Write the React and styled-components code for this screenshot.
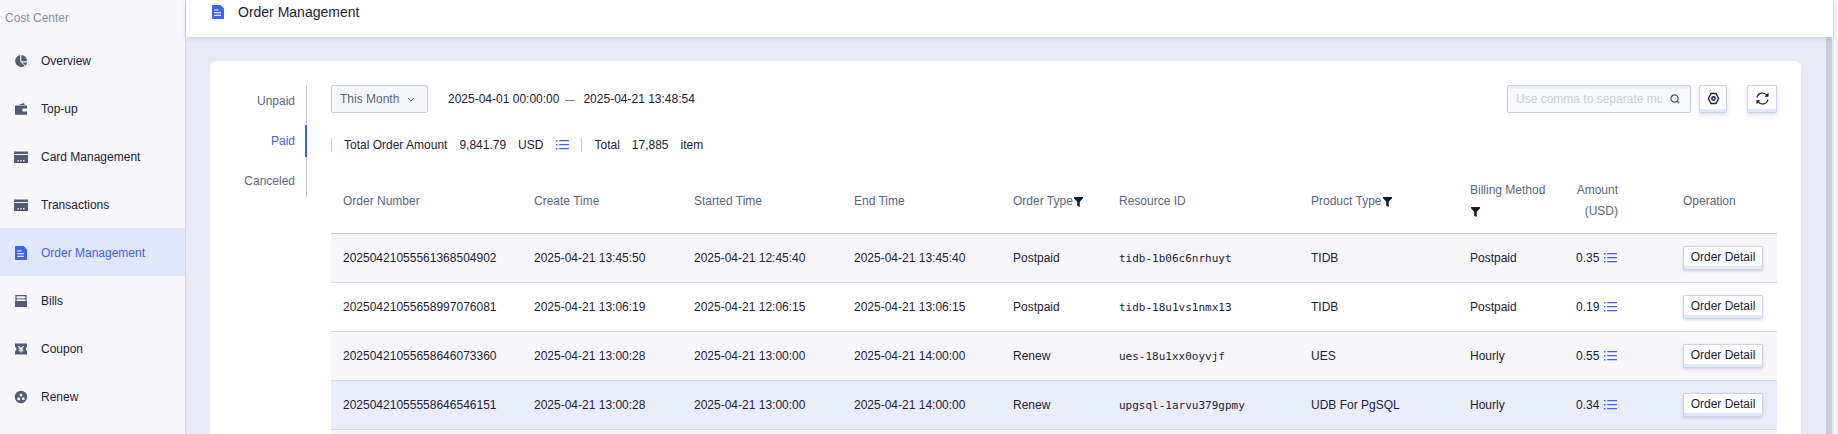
import React from "react";
import styled, { createGlobalStyle } from "styled-components";

const GlobalStyle = createGlobalStyle`
  html, body {
    margin: 0;
    padding: 0;
    height: 100%;
    overflow: hidden;
  }
  body {
    font-family: "Liberation Sans", Arial, sans-serif;
    font-size: 12px;
    color: #1d2235;
  }
  * { box-sizing: border-box; }
`;

const Page = styled.div`
  display: flex;
  width: 1838px;
  height: 434px;
  overflow: hidden;
  background: #e8ebf5;
`;

const Sidebar = styled.aside`
  flex: 0 0 186px;
  background: #f6f6fb;
  border-right: 1px solid #d5d9e6;
`;

const SidebarTitle = styled.div`
  height: 36px;
  line-height: 37px;
  padding-left: 5px;
  color: #8790a6;
`;

const MenuItem = styled.div`
  display: flex;
  align-items: center;
  gap: 13px;
  height: 48px;
  padding: 2px 0 0 14px;
  color: ${(p) => (p.$active ? "#3f62f6" : "#1d2235")};
  background: ${(p) => (p.$active ? "#e2e8fc" : "transparent")};
`;

const MenuIcon = styled.svg`
  flex: none;
  width: 14px;
  height: 14px;
`;

const Main = styled.main`
  flex: 1;
  display: flex;
  flex-direction: column;
  min-width: 0;
`;

const Header = styled.header`
  flex: 0 0 37px;
  display: flex;
  align-items: flex-start;
  gap: 13px;
  padding: 5px 0 0 25px;
  background: #fff;
  font-size: 14px;
  line-height: 14px;
  box-shadow: 0 2px 5px rgba(120, 130, 170, 0.22);
  position: relative;
`;

const Body = styled.div`
  flex: 1;
  display: flex;
  min-height: 0;
`;

const Scroller = styled.div`
  flex: 1;
  padding: 24px 25px 0 24px;
  min-width: 0;
`;

const ScrollTrack = styled.div`
  flex: 0 0 6px;
  margin-right: 1px;
  background: #c9ccd5;
  border-radius: 2px 2px 0 0;
`;

const RightEdge = styled.div`
  flex: 0 0 5px;
  background: #f4f4f8;
  border-left: 1px solid #e2e3ea;
`;

const Card = styled.section`
  display: flex;
  height: 100%;
  padding: 24px 24px 0 0;
  background: #fff;
  border-radius: 6px 6px 0 0;
`;

const Tabs = styled.nav`
  flex: 0 0 97px;
  align-self: flex-start;
  display: flex;
  flex-direction: column;
  gap: 8px;
  margin-right: 24px;
  border-right: 1px solid #c6cce0;
`;

const Tab = styled.div`
  height: 32px;
  display: flex;
  align-items: center;
  justify-content: flex-end;
  padding-right: 10px;
  color: ${(p) => (p.$active ? "#3f62f6" : "#5c6780")};
  border-right: 2px solid ${(p) => (p.$active ? "#3f62f6" : "transparent")};
  margin-right: -1px;
`;

const Content = styled.div`
  flex: 1;
  min-width: 0;
`;

const Toolbar = styled.div`
  display: flex;
  align-items: center;
  height: 28px;
`;

const Select = styled.div`
  display: flex;
  align-items: center;
  justify-content: space-between;
  width: 97px;
  height: 28px;
  padding: 0 12px 0 8px;
  color: #5c6780;
  background: #f6f7fb;
  border: 1px solid #c6cce0;
  border-radius: 2px;
  margin-right: 20px;
`;

const DateText = styled.span`
  white-space: nowrap;
`;

const DateDash = styled.span`
  width: 10px;
  height: 1px;
  margin: 2px 8px 0 6px;
  background: #7b849b;
`;

const Spacer = styled.div`
  flex: 1;
`;

const SearchBox = styled.div`
  display: flex;
  align-items: center;
  width: 184px;
  height: 28px;
  padding: 0 10px 0 8px;
  background: #f8f9fc;
  border: 1px solid #c6cce0;
  border-radius: 2px;
  box-shadow: inset 0 3px 0 #f1f2f7;
`;

const SearchInput = styled.input`
  flex: 1;
  min-width: 0;
  margin-right: 8px;
  padding: 0;
  border: 0;
  outline: 0;
  background: transparent;
  font: inherit;
  &::placeholder {
    color: #c9cdd9;
    opacity: 1;
  }
`;

const IconButton = styled.button`
  display: flex;
  align-items: center;
  justify-content: center;
  height: 28px;
  width: ${(p) => p.$w}px;
  margin-left: ${(p) => p.$ml}px;
  padding: 0 0 2px;
  background: #fff;
  border: 1px solid #cdd3e5;
  border-radius: 2px;
  box-shadow: inset 0 -3px 0 #e4e9fa, 0 2px 4px rgba(110, 120, 160, 0.25);
`;

const Summary = styled.div`
  display: flex;
  align-items: center;
  height: 14px;
  margin: 25px 0 15px;
  border-left: 1px solid #c6cce0;
  padding-left: 12px;
  white-space: nowrap;
`;

const SummaryText = styled.span`
  margin-right: 12px;
`;

const SummaryList = styled.span`
  display: flex;
  margin-left: 1px;
`;

const SummaryDivider = styled.span`
  width: 1px;
  height: 14px;
  margin: 0 12px;
  background: #c6cce0;
`;

const Table = styled.table`
  width: 1446px;
  table-layout: fixed;
  border-collapse: collapse;
`;

const Th = styled.th`
  height: 66px;
  padding: 3px 12px 0;
  font-weight: 400;
  line-height: 21px;
  text-align: left;
  color: #5c6780;
  border-bottom: 1px solid #c6cce0;
`;

const AmountHead = styled.span`
  display: inline-block;
  width: 42px;
  text-align: right;
`;

const Funnel = styled.svg`
  display: inline-block;
  width: 9px;
  height: 10px;
  margin-left: 1px;
  vertical-align: -2px;
`;

const Row = styled.tr`
  background: ${(p) => p.$bg};
`;

const Td = styled.td`
  height: 49px;
  padding: 0 12px;
  white-space: nowrap;
  border-bottom: 1px solid #d4d9ea;
`;

const Mono = styled.span`
  font-family: "DejaVu Sans Mono", "Liberation Mono", monospace;
  font-size: 11px;
`;

const AmountCell = styled.span`
  display: inline-flex;
  align-items: center;
  gap: 5px;
`;

const DetailButton = styled.button`
  width: 80px;
  height: 24px;
  padding: 0 0 2px;
  font: inherit;
  color: #1d2235;
  background: #fff;
  border: 1px solid #cdd3e5;
  border-radius: 2px;
  box-shadow: inset 0 -3px 0 #e4e9fa, 0 1px 3px rgba(110, 120, 160, 0.3);
`;

const GRAY = "#515d78";

const PieIcon = () => (
  <MenuIcon viewBox="0 0 14 14">
    <path fill={GRAY} d="M6.200 1v6.500l4.600 4.500A6.100 6.100 0 1 1 6.200 1z" />
    <path fill={GRAY} d="M7.400 1a6.100 6.100 0 0 1 5.700 6.200H7.400z" />
    <path fill={GRAY} d="M8.200 8.400h4.900a6 6 0 0 1-1.500 3z" />
  </MenuIcon>
);

const WalletIcon = () => (
  <MenuIcon viewBox="0 0 14 14">
    <path fill={GRAY} d="M4.500 2.900 10 .9l.8 2z" />
    <path fill={GRAY} d="M1 3.500h12v3H9.500a1.500 1.500 0 0 0 0 3H13v3.300H1z" />
  </MenuIcon>
);

const CardIcon = () => (
  <MenuIcon viewBox="0 0 14 14">
    <path fill={GRAY} d="M0 1.500h14v2.400H0zM0 5h14v8H0z" />
    <path fill="#f0f1f7" d="M3.500 10h1.500v1.200H3.500zM6.200 10h1.500v1.200H6.200zM9 10h1.500v1.200H9z" />
  </MenuIcon>
);

const BillIcon = () => (
  <MenuIcon viewBox="0 0 14 14">
    <path fill={GRAY} d="M1 7h12v6H1z" />
    <path fill="none" stroke={GRAY} strokeWidth="1.200" d="M2 7V1.600h10V7" />
    <path fill={GRAY} d="M2 4.300h10v1H2z" />
  </MenuIcon>
);

const CouponIcon = () => (
  <MenuIcon viewBox="0 0 14 14">
    <path fill={GRAY} d="M1 1.500h12v3.600a2 2 0 0 0 0 3.800v3.600H1V8.900a2 2 0 0 0 0-3.800z" />
    <path fill="#f0f1f7" d="m4.600 3.800 2.400 2 2.400-2 .6.800-1.800 1.900h1.100v1H7.600v.8h1.700v1H7.600v1.200H6.400v-1.200H4.700v-1h1.700v-.8H4.700v-1h1.100L4 4.600z" />
  </MenuIcon>
);

const RenewIcon = () => (
  <MenuIcon viewBox="0 0 14 14">
    <circle cx="7" cy="7" r="6.200" fill={GRAY} />
    <circle cx="7" cy="4.900" r="1.500" fill="#eef0f6" />
    <circle cx="4.700" cy="8.800" r="1.500" fill="#eef0f6" />
    <circle cx="9.300" cy="8.800" r="1.500" fill="#eef0f6" />
  </MenuIcon>
);

const DocIcon = () => (
  <MenuIcon viewBox="0 0 14 14">
    <path fill="#3f62f6" d="M1 .8a.8.8 0 0 1 .8-.8h7.700L13 3.400v9.800a.8.8 0 0 1-.8.8H1.800a.8.800 0 0 1-.8-.8z" />
    <path fill="#dfe5fd" d="M3.200 4.200h4.300v1.200H3.200zM3.200 7H10v1.200H3.200zM3.200 9.800H10V11H3.200z" />
  </MenuIcon>
);

const ListIcon = () => (
  <svg width="13" height="10" viewBox="0 0 13 10">
    <path fill="#3f62f6" d="M0 0h1.500v1.500H0zM0 4h1.500v1.500H0zM0 8h1.500v1.500H0zM3.200 0H13v1.200H3.200zM3.200 4H13v1.200H3.200zM3.200 8H13v1.200H3.200z" />
  </svg>
);

const FunnelIcon = () => (
  <Funnel viewBox="0 0 10 11">
    <path fill="#14192e" d="M0 0h10v1.400L6.400 5.200V11L3.600 9.600V5.200L0 1.400z" />
  </Funnel>
);

const Chevron = () => (
  <svg width="8" height="5" viewBox="0 0 8 5">
    <path fill="none" stroke="#5c6780" strokeWidth="1" d="m1 1 3 3 3-3" />
  </svg>
);

const SearchIcon = () => (
  <svg width="10" height="10" viewBox="0 0 10 10">
    <circle cx="4.500" cy="4.500" r="3.600" fill="none" stroke="#4a5570" strokeWidth="1.200" />
    <path stroke="#4a5570" strokeWidth="1.200" d="m7 7 2.200 2.200" />
  </svg>
);

const GearIcon = () => (
  <svg width="13" height="13" viewBox="0 0 13 13">
    <path fill="none" stroke="#14192e" strokeWidth="1.400" strokeLinejoin="round" d="M4 1.500h5l2.600 5L9 11.500H4L1.400 6.500z" />
    <circle cx="6.500" cy="6.500" r="1.700" fill="none" stroke="#14192e" strokeWidth="1.400" />
  </svg>
);

const RefreshIcon = () => (
  <svg width="13" height="13" viewBox="0 0 13 13">
    <path fill="none" stroke="#14192e" strokeWidth="1.200" d="M1 5.500A5.500 5.500 0 0 1 11 3.500M12 7.500A5.500 5.500 0 0 1 2 9.500" />
    <path fill="#14192e" d="M12.500.8v4H8.500zM.5 12.200v-4h4z" />
  </svg>
);

const menu = [
  { label: "Overview", icon: <PieIcon /> },
  { label: "Top-up", icon: <WalletIcon /> },
  { label: "Card Management", icon: <CardIcon /> },
  { label: "Transactions", icon: <CardIcon /> },
  { label: "Order Management", icon: <DocIcon />, active: true },
  { label: "Bills", icon: <BillIcon /> },
  { label: "Coupon", icon: <CouponIcon /> },
  { label: "Renew", icon: <RenewIcon /> },
];

const widths = [191, 160, 160, 159, 106, 192, 159, 106, 107, 106];

const rows = [
  ["20250421055561368504902", "2025-04-21 13:45:50", "2025-04-21 12:45:40", "2025-04-21 13:45:40", "Postpaid", "tidb-1b06c6nrhuyt", "TIDB", "Postpaid", "0.35", "#f6f6fb"],
  ["20250421055658997076081", "2025-04-21 13:06:19", "2025-04-21 12:06:15", "2025-04-21 13:06:15", "Postpaid", "tidb-18u1vs1nmx13", "TIDB", "Postpaid", "0.19", "#fff"],
  ["20250421055658646073360", "2025-04-21 13:00:28", "2025-04-21 13:00:00", "2025-04-21 14:00:00", "Renew", "ues-18u1xx0oyvjf", "UES", "Hourly", "0.55", "#f6f6fb"],
  ["20250421055558646546151", "2025-04-21 13:00:28", "2025-04-21 13:00:00", "2025-04-21 14:00:00", "Renew", "upgsql-1arvu379gpmy", "UDB For PgSQL", "Hourly", "0.34", "#e9edfb"],
];

export default function App() {
  return (
    <Page>
      <GlobalStyle />
      <Sidebar>
        <SidebarTitle>Cost Center</SidebarTitle>
        {menu.map((m) => (
          <MenuItem key={m.label} $active={m.active}>
            {m.icon}
            {m.label}
          </MenuItem>
        ))}
      </Sidebar>
      <Main>
        <Header>
          <DocIcon />
          Order Management
        </Header>
        <Body>
          <Scroller>
            <Card>
              <Tabs>
                <Tab>Unpaid</Tab>
                <Tab $active>Paid</Tab>
                <Tab>Canceled</Tab>
              </Tabs>
              <Content>
                <Toolbar>
                  <Select>
                    This Month
                    <Chevron />
                  </Select>
                  <DateText>2025-04-01 00:00:00</DateText>
                  <DateDash />
                  <DateText>2025-04-21 13:48:54</DateText>
                  <Spacer />
                  <SearchBox>
                    <SearchInput placeholder="Use comma to separate multiple" />
                    <SearchIcon />
                  </SearchBox>
                  <IconButton $w={28} $ml={8}>
                    <GearIcon />
                  </IconButton>
                  <IconButton $w={30} $ml={20}>
                    <RefreshIcon />
                  </IconButton>
                </Toolbar>
                <Summary>
                  <SummaryText>Total Order Amount</SummaryText>
                  <SummaryText>9,841.79</SummaryText>
                  <SummaryText>USD</SummaryText>
                  <SummaryList>
                    <ListIcon />
                  </SummaryList>
                  <SummaryDivider />
                  <SummaryText>Total</SummaryText>
                  <SummaryText>17,885</SummaryText>
                  <span>item</span>
                </Summary>
                <Table>
                  <colgroup>
                    {widths.map((w, i) => (
                      <col key={i} width={w} />
                    ))}
                  </colgroup>
                  <thead>
                    <tr>
                      <Th>Order Number</Th>
                      <Th>Create Time</Th>
                      <Th>Started Time</Th>
                      <Th>End Time</Th>
                      <Th>Order Type<FunnelIcon /></Th>
                      <Th>Resource ID</Th>
                      <Th>Product Type<FunnelIcon /></Th>
                      <Th>Billing Method <FunnelIcon /></Th>
                      <Th><AmountHead>Amount (USD)</AmountHead></Th>
                      <Th>Operation</Th>
                    </tr>
                  </thead>
                  <tbody>
                    {rows.map((r) => (
                      <Row key={r[0]} $bg={r[9]}>
                        <Td>{r[0]}</Td>
                        <Td>{r[1]}</Td>
                        <Td>{r[2]}</Td>
                        <Td>{r[3]}</Td>
                        <Td>{r[4]}</Td>
                        <Td><Mono>{r[5]}</Mono></Td>
                        <Td>{r[6]}</Td>
                        <Td>{r[7]}</Td>
                        <Td>
                          <AmountCell>
                            {r[8]}
                            <ListIcon />
                          </AmountCell>
                        </Td>
                        <Td><DetailButton>Order Detail</DetailButton></Td>
                      </Row>
                    ))}
                    <Row $bg="#f6f6fb">
                      <Td colSpan={10} />
                    </Row>
                  </tbody>
                </Table>
              </Content>
            </Card>
          </Scroller>
          <ScrollTrack />
        </Body>
      </Main>
      <RightEdge />
    </Page>
  );
}
